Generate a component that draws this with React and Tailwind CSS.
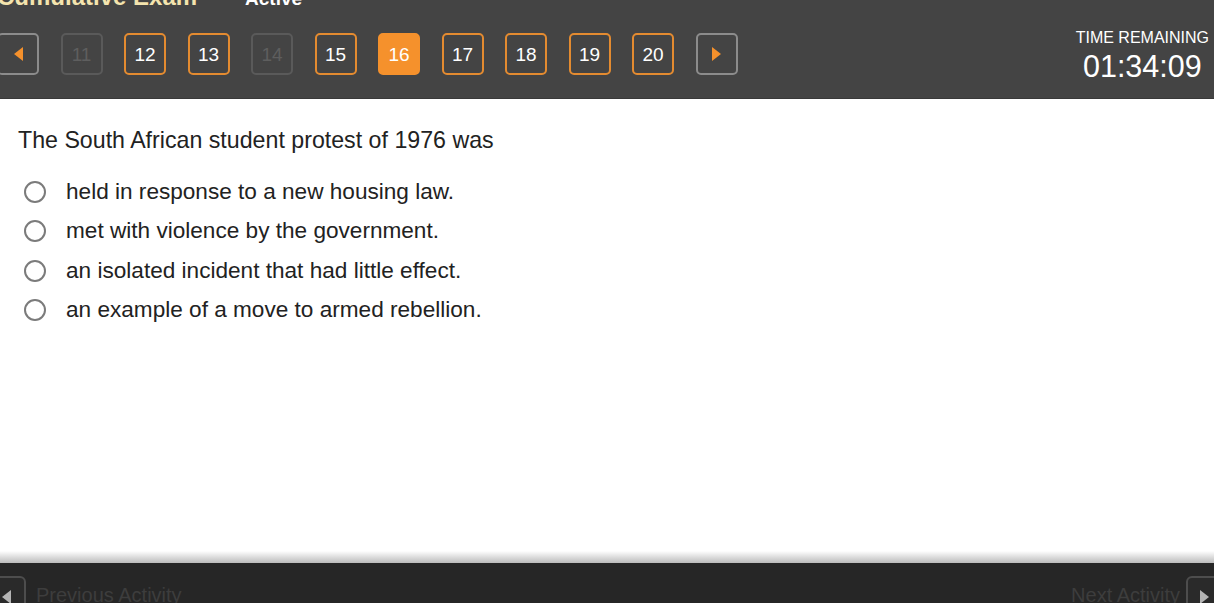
import React from "react";

const pages = [
  { n: 11, state: "disabled" },
  { n: 12, state: "open" },
  { n: 13, state: "open" },
  { n: 14, state: "disabled" },
  { n: 15, state: "open" },
  { n: 16, state: "current" },
  { n: 17, state: "open" },
  { n: 18, state: "open" },
  { n: 19, state: "open" },
  { n: 20, state: "open" },
];

const choices = [
  "held in response to a new housing law.",
  "met with violence by the government.",
  "an isolated incident that had little effect.",
  "an example of a move to armed rebellion.",
];

function Arrow({ dir, color }) {
  return (
    <svg width="9" height="14" viewBox="0 0 9 14">
      {dir === "left" ? (
        <path d="M9 0 L9 14 L0 7 Z" fill={color} />
      ) : (
        <path d="M0 0 L0 14 L9 7 Z" fill={color} />
      )}
    </svg>
  );
}

function PageBox({ n, state }) {
  const styles = {
    disabled: "border-[#5a5a5a] text-[#5e5e5e]",
    open: "border-[#e48b30] text-white",
    current: "border-[#f5912c] bg-[#f5912c] text-white",
  };
  return (
    <button
      className={`w-[42px] h-[42px] shrink-0 rounded-[5px] border-2 flex items-center justify-center text-[19px] leading-none ${styles[state]}`}
    >
      {n}
    </button>
  );
}

export default function App() {
  return (
    <div className="h-[603px] w-full overflow-hidden flex flex-col bg-white font-['Liberation_Sans',Arial,sans-serif]">
      {/* Header */}
      <div className="h-[99px] shrink-0 bg-[#444444] border-b border-[#393939] px-0">
        <div className="flex items-baseline -mt-[15px] h-[24px]">
          <span className="text-[24px] leading-none font-bold text-[#f4e4ae] -ml-[3px]">Cumulative Exam</span>
          <span className="text-[19px] leading-none font-bold text-white ml-[48px]">Active</span>
        </div>
        <div className="flex items-start justify-between mt-[20px]">
          <div className="flex items-center gap-[21.5px] -ml-[3px] mt-[4px]">
            <button className="w-[42px] h-[42px] shrink-0 rounded-[5px] border-2 border-[#8c8c8c] flex items-center justify-center">
              <Arrow dir="left" color="#f5912c" />
            </button>
            {pages.map((p) => (
              <PageBox key={p.n} n={p.n} state={p.state} />
            ))}
            <button className="w-[42px] h-[42px] shrink-0 rounded-[5px] border-2 border-[#8c8c8c] flex items-center justify-center">
              <Arrow dir="right" color="#f5912c" />
            </button>
          </div>
          <div className="flex flex-col items-center pr-[5px] text-white">
            <span className="text-[16px] leading-[18px]">TIME REMAINING</span>
            <span className="text-[30.5px] leading-none mt-[4px]">01:34:09</span>
          </div>
        </div>
      </div>

      {/* Question */}
      <div className="flex-1 pl-[18px] pt-[27px] text-[#222222]">
        <p className="text-[23.2px] leading-[28px]">The South African student protest of 1976 was</p>
        <div className="mt-[18px] flex flex-col">
          {choices.map((c) => (
            <label key={c} className="h-[39.5px] flex items-center">
              <span className="w-[22px] h-[22px] ml-[6px] rounded-full border-2 border-[#7b7b7b] shrink-0" />
              <span className="ml-[20px] text-[22.6px] leading-[28px]">{c}</span>
            </label>
          ))}
        </div>
      </div>

      {/* Footer */}
      <div className="h-[12px] shrink-0 bg-gradient-to-b from-white to-[#bcbcbc]" />
      <div className="h-[40px] shrink-0 overflow-hidden bg-[#262626] flex items-start justify-between pt-[13px]">
        <div className="flex items-start">
          <button className="w-[42px] h-[42px] -ml-[16px] shrink-0 rounded-[6px] border-2 border-[#4d4d4d] bg-[#2a2a2a] flex items-center justify-end pr-[13px]">
            <Arrow dir="left" color="#b5b5b5" />
          </button>
          <span className="ml-[10px] mt-[9px] text-[20px] leading-[20px] text-[#3d3d3d]">Previous Activity</span>
        </div>
        <div className="flex items-start">
          <span className="mr-[6px] mt-[9px] text-[20px] leading-[20px] text-[#3d3d3d]">Next Activity</span>
          <button className="w-[42px] h-[42px] -mr-[14px] shrink-0 rounded-[6px] border-2 border-[#4d4d4d] bg-[#2a2a2a] flex items-center justify-start pl-[12px]">
            <Arrow dir="right" color="#b5b5b5" />
          </button>
        </div>
      </div>
    </div>
  );
}
